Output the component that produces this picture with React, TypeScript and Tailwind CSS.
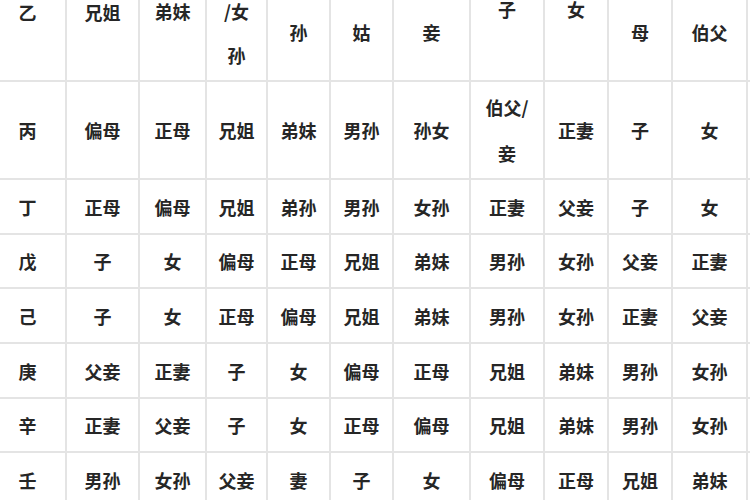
import React from "react";

const rows: string[][] = [
  ["乙", "兄姐", "弟妹", "/女\n孙", "孙", "姑", "妾", "子", "女", "母", "伯父", ""],
  ["丙", "偏母", "正母", "兄姐", "弟妹", "男孙", "孙女", "伯父/\n妾", "正妻", "子", "女", ""],
  ["丁", "正母", "偏母", "兄姐", "弟孙", "男孙", "女孙", "正妻", "父妾", "子", "女", ""],
  ["戊", "子", "女", "偏母", "正母", "兄姐", "弟妹", "男孙", "女孙", "父妾", "正妻", ""],
  ["己", "子", "女", "正母", "偏母", "兄姐", "弟妹", "男孙", "女孙", "正妻", "父妾", ""],
  ["庚", "父妾", "正妻", "子", "女", "偏母", "正母", "兄姐", "弟妹", "男孙", "女孙", ""],
  ["辛", "正妻", "父妾", "子", "女", "正母", "偏母", "兄姐", "弟妹", "男孙", "女孙", ""],
  ["壬", "男孙", "女孙", "父妾", "妻", "子", "女", "偏母", "正母", "兄姐", "弟妹", ""],
];

// first row is cut off at the top, so its cells sit at different heights
const firstRowShift = [
  "-mt-[56px]", "-mt-[56px]", "-mt-[58px]", "-mt-[14px]", "-mt-[16px]", "-mt-[16px]", "-mt-[16px]",
  "-mt-[62px]", "-mt-[62px]", "-mt-[16px]", "-mt-[16px]", "mt-0",
];

const rowHeights = [
  "h-[82px]", "h-[98px]", "h-[55px]", "h-[54px]", "h-[55px]", "h-[55px]", "h-[54px]", "h-[56px]",
];

export default function App() {
  return (
    <div
      className="w-[750px] h-[500px] overflow-hidden bg-white text-[#262626]"
      style={{ fontFamily: '"Noto Sans CJK SC", "Noto Sans", sans-serif' }}
    >
      <div className="-ml-[10px] grid grid-cols-[77px_73px_67px_61px_63px_63px_77px_74px_64px_64px_75px_40px]">
        {rows.map((row, r) =>
          row.map((cell, c) => (
            <div
              key={`${r}-${c}`}
              className={`${rowHeights[r]} flex items-center justify-center border-r-2 border-b-2 border-[#e4e4e4] overflow-hidden`}
            >
              <div
                className={`flex flex-col items-center text-[18px] font-bold ${
                  r === 1 ? "leading-[46px]" : "leading-[44px]"
                } ${r === 0 ? firstRowShift[c] : ""}`}
              >
                {cell.split("\n").map((line, i) => (
                  <span key={i}>{line}</span>
                ))}
              </div>
            </div>
          ))
        )}
      </div>
    </div>
  );
}
